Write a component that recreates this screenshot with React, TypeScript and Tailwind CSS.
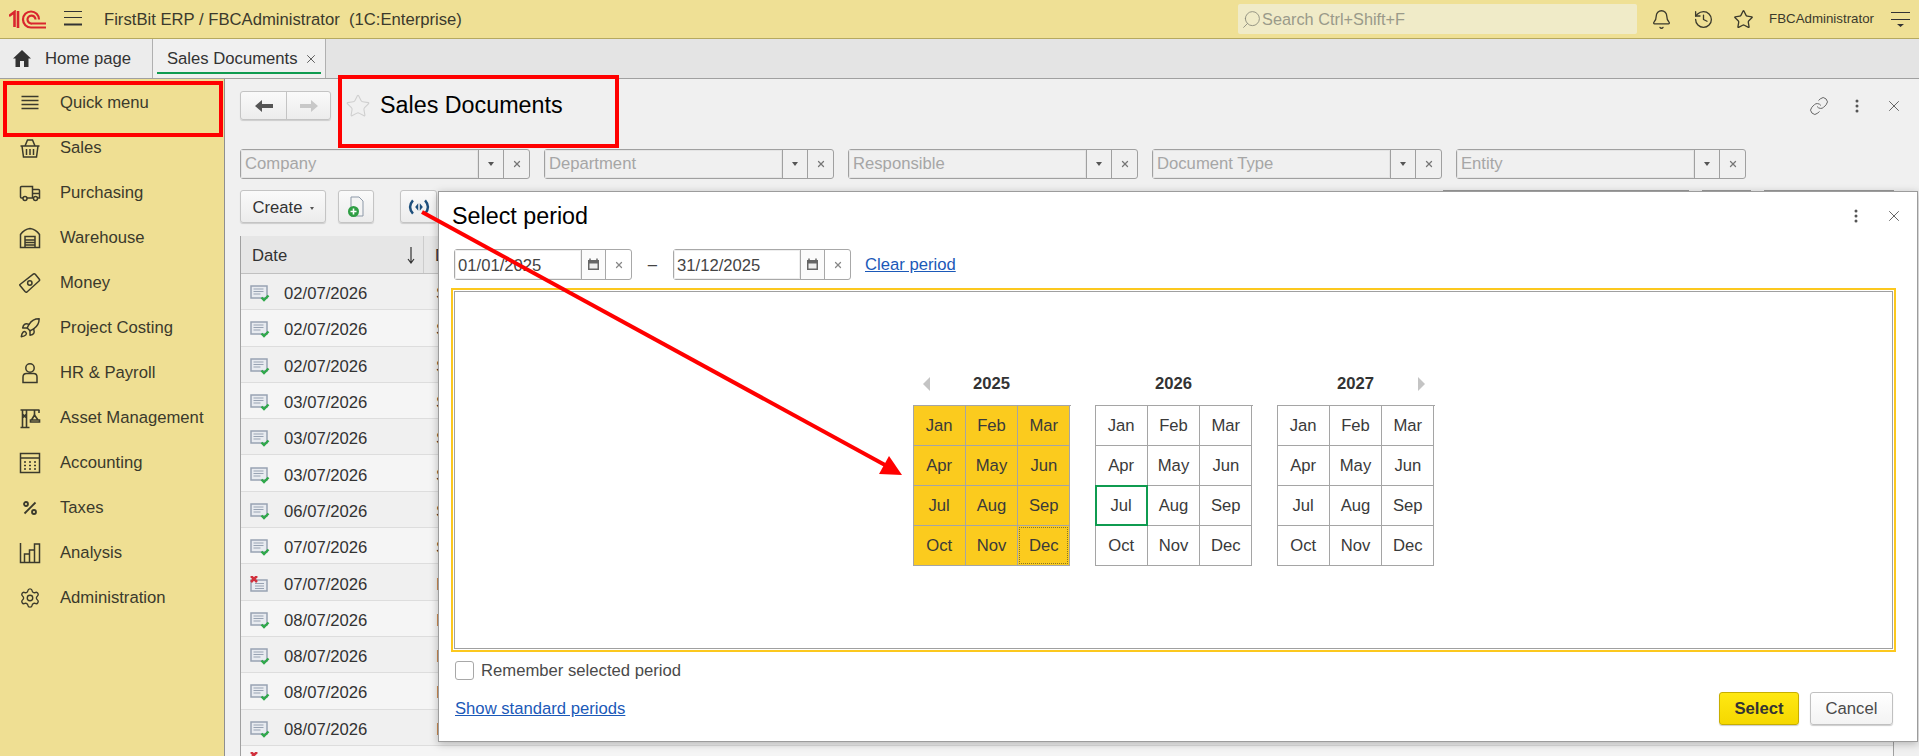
import { Bell, History, Link, Search, Star, Rocket, Settings, X } from "lucide-react";

const MENU = ["Quick menu", "Sales", "Purchasing", "Warehouse", "Money", "Project Costing", "HR & Payroll", "Asset Management", "Accounting", "Taxes", "Analysis", "Administration"];

const ROWS = [
  ["02/07/2026", "S", true], ["02/07/2026", "S", true], ["02/07/2026", "S", true], ["03/07/2026", "S", true],
  ["03/07/2026", "S", true], ["03/07/2026", "S", true], ["06/07/2026", "S", true], ["07/07/2026", "S", true],
  ["07/07/2026", "I", false], ["08/07/2026", "I", true], ["08/07/2026", "I", true], ["08/07/2026", "I", true],
  ["08/07/2026", "I", true],
] as const;

const MONTHS = ["Jan", "Feb", "Mar", "Apr", "May", "Jun", "Jul", "Aug", "Sep", "Oct", "Nov", "Dec"];
const FILTERS = ["Company", "Department", "Responsible", "Document Type", "Entity"];

function MenuIcon({ name }: { name: string }) {
  const c = "w-[22px] h-[22px] shrink-0 text-[#3b3a2c]";
  switch (name) {
    case "Quick menu":
      return <svg className={c} viewBox="0 0 22 22" stroke="currentColor" strokeWidth="1.3"><path d="M2.5 4.5h17M2.5 8.5h17M2.5 12.5h17M2.5 16.5h17" /></svg>;
    case "Sales":
      return (
        <svg className={c} viewBox="0 0 22 22" fill="none" stroke="currentColor" strokeWidth="1.5">
          <path d="M6 9 8.5 3h5L16 9M1.5 9h19M3 9l1.5 11h13L19 9M7.5 12v6M11 12v6M14.5 12v6" />
        </svg>
      );
    case "Purchasing":
      return (
        <svg className={c} viewBox="0 0 22 22" fill="none" stroke="currentColor" strokeWidth="1.5">
          <path d="M4 16H2.5a1 1 0 0 1-1-1V5.5a1 1 0 0 1 1-1h11V16H8M13.5 7.5h6a1 1 0 0 1 1 1V16h-1.5M14.5 16h-1M13.5 11.5h7" />
          <circle cx="6" cy="16.5" r="2" /><circle cx="16.5" cy="16.5" r="2" />
        </svg>
      );
    case "Warehouse":
      return (
        <svg className={c} viewBox="0 0 22 22" fill="none" stroke="currentColor" strokeWidth="1.5">
          <path d="M1.5 20.5V7.5C4 4 7 2 11 1.5c4 .5 7 2.5 9.5 6v13z" />
          <path d="M6 20.5V9.5h10v11" />
          <path d="M6 13h10M6 15.5h10M6 18h10" strokeWidth="1.7" />
        </svg>
      );
    case "Money":
      return (
        <svg className={c} viewBox="0 0 22 22" fill="none" stroke="currentColor" strokeWidth="1.5">
          <path d="M1 12.5 14.5 2q1-.5 2 .5l4 5q.5 1-.5 1.5L8 20q-1 .5-2-.5l-5-6q-.5-.5 0-1z" />
          <circle cx="10.8" cy="11" r="2.2" />
        </svg>
      );
    case "Project Costing":
      return <Rocket className={c} strokeWidth={1.6} />;
    case "HR & Payroll":
      return (
        <svg className={c} viewBox="0 0 22 22" fill="none" stroke="currentColor" strokeWidth="1.5">
          <circle cx="11" cy="6" r="4.2" />
          <path d="M4 20.5V15c0-2 1.5-3.5 3.5-3.5h7c2 0 3.5 1.5 3.5 3.5v5.5z" />
        </svg>
      );
    case "Asset Management":
      return (
        <svg className={c} viewBox="0 0 22 22" fill="none" stroke="currentColor" strokeWidth="1.6">
          <path d="M1.5 20.5h9M1.5 3h19M3.5 3v17M7.5 3v17M3.5 7l4 4M7.5 7l-4 4M15.5 3v5" />
          <path d="M12.5 13l3-5 3.5 5zM11.5 13h9v2h-9z" />
          <path d="M20 3v3" />
        </svg>
      );
    case "Accounting":
      return (
        <svg className={c} viewBox="0 0 22 22" fill="none" stroke="currentColor" strokeWidth="1.5">
          <rect x="1.5" y="1.5" width="19" height="19" /><path d="M1.5 6h19" />
          <path d="M5 10h2M10 10h2M15 10h2M5 13.5h2M10 13.5h2M15 13.5h2M5 17h2M10 17h2M15 17h2" />
        </svg>
      );
    case "Taxes":
      return (
        <svg className={c} viewBox="0 0 22 22" fill="none" stroke="currentColor" strokeWidth="1.8">
          <path d="M16.5 5.5l-11 11" /><circle cx="7" cy="7" r="2" /><circle cx="15" cy="15" r="2" />
        </svg>
      );
    case "Analysis":
      return (
        <svg className={c} viewBox="0 0 22 22" fill="none" stroke="currentColor" strokeWidth="1.5">
          <path d="M1.5 1v19.5h19V2h-5v18.5M15.5 8h-5v12.5M10.5 12h-5v8.5" />
        </svg>
      );
    default:
      return <Settings className={c} strokeWidth={1.5} />;
  }
}

function DocIcon({ ok }: { ok: boolean }) {
  return (
    <svg className="w-[20px] h-[18px] shrink-0 mt-[5px]" viewBox="0 0 20 18" fill="none">
      <rect x="1" y={ok ? 1 : 4} width="16" height={ok ? 12 : 11} fill="#e8ebf0" stroke="#98a3b3" strokeWidth="1.5" />
      <path d={ok ? "M3.5 4h10M3.5 6.5h10M3.5 9h7" : "M5 7.5h9M5 10h9M5 12.5h9"} stroke="#98a3b3" />
      {ok ? (
        <path d="m11.5 12.5 2.5 2.5 4.5-4.500" stroke="#2fa84a" strokeWidth="2.4" />
      ) : (
        <path d="m1 0 6 6M7 0 1 6" stroke="#d1303c" strokeWidth="2.6" />
      )}
    </svg>
  );
}

function Caret() {
  return <span className="w-0 h-0 border-x-[3px] border-t-[4px] border-x-transparent border-t-[#555]" />;
}

function Filter({ label }: { label: string }) {
  return (
    <div className="flex w-[290px] h-[30px] rounded-[3px] border border-[#a0a0a0] bg-[#f0f0f0]">
      <div className="flex-1 pl-[4px] text-[#a6a6a6] leading-[28px] border-r border-[#a0a0a0] shadow-[inset_0_0_0_1px_#e4e4e4]">{label}</div>
      <div className="w-[25px] flex items-center justify-center border-r border-[#a0a0a0]"><Caret /></div>
      <div className="w-[25px] flex items-center justify-center"><X className="w-[10px] h-[10px] text-[#777]" strokeWidth={3} /></div>
    </div>
  );
}

function DateField({ value }: { value: string }) {
  return (
    <div className="flex w-[178px] h-[31px] rounded-[3px] border border-[#a8a8a8] bg-white">
      <div className="flex-1 pl-[3px] pt-[1px] leading-[30px] text-[#444] shadow-[inset_0_0_0_1px_#eeeeee]">{value}</div>
      <div className="w-[25px] flex items-center justify-center border-x border-[#a8a8a8] bg-[#fbfbfb]">
        <svg className="w-[13px] h-[13px]" viewBox="0 0 13 13"><rect x="1" y="2" width="11" height="10" fill="#666" /><rect x="2.5" y="5.5" width="8" height="5" fill="#eee" /><path d="M3 .5v3M10 .5v3" stroke="#666" strokeWidth="1.5" /></svg>
      </div>
      <div className="w-[25px] flex items-center justify-center"><X className="w-[10px] h-[10px] text-[#888]" strokeWidth={3} /></div>
    </div>
  );
}

function YearGrid({ year, selected, left, right }: { year: number; selected?: boolean; left?: boolean; right?: boolean }) {
  return (
    <div className="w-[158px]">
      <div className="relative h-[28px] flex items-start justify-center font-bold text-[#333] leading-[13px]">
        <span>{year}</span>
        {left && <span className="absolute left-[10px] top-[0px] w-0 h-0 border-y-[7px] border-r-[7px] border-y-transparent border-r-[#c4c4c4]" />}
        {right && <span className="absolute right-[10px] top-[0px] w-0 h-0 border-y-[7px] border-l-[7px] border-y-transparent border-l-[#c4c4c4]" />}
      </div>
      <div className="grid grid-cols-3 border-l border-t border-[#a5a5a5]">
        {MONTHS.map((m) => (
          <div
            key={m}
            className={`relative h-[40px] flex items-center justify-center border-r border-b border-[#a5a5a5] text-[#3a3a3a] ${selected ? "bg-[#fbcb1e]" : "bg-white"}`}
          >
            {m}
            {!selected && year === 2026 && m === "Jul" && <span className="absolute -inset-px border-2 border-[#0f9b50]" />}
            {selected && m === "Dec" && <span className="absolute inset-[1px] border border-dotted border-[#8a7420]" />}
          </div>
        ))}
      </div>
    </div>
  );
}

function Dots() {
  return <svg className="w-[4px] h-[14px]" viewBox="0 0 4 14" fill="#555"><circle cx="2" cy="2" r="1.5" /><circle cx="2" cy="7" r="1.5" /><circle cx="2" cy="12" r="1.5" /></svg>;
}

function SelectPeriod() {
  return (
    <div className="absolute left-[438px] top-[191px] w-[1480px] h-[551px] flex flex-col bg-white border border-[#9c9c9c] shadow-[0_2px_8px_rgba(0,0,0,0.25)] pl-[12px] pr-[21px]">
      <div className="flex items-center h-[48px] shrink-0">
        <div className="text-[23.3px] text-black pl-[1px]">Select period</div>
        <div className="ml-auto flex items-center gap-[27px] -mr-[7px]">
          <Dots />
          <X className="w-[18px] h-[18px] text-[#555]" strokeWidth={1.2} />
        </div>
      </div>
      <div className="flex items-center h-[31px] pl-[3px] mt-[9px] shrink-0">
        <DateField value="01/01/2025" />
        <span className="w-[41px] text-center text-[#444]">–</span>
        <DateField value="31/12/2025" />
        <a className="ml-[14px] text-[#1b59b8] underline">Clear period</a>
      </div>
      <div className="mt-[8px] h-[364px] shrink-0 border-2 border-[#fcc81e] p-[1px]">
        <div className="h-full border border-[#a0a0a0] flex items-center justify-center gap-[24px] pt-[3px]">
          <YearGrid year={2025} selected left />
          <YearGrid year={2026} />
          <YearGrid year={2027} right />
        </div>
      </div>
      <label className="flex items-center gap-[7px] pl-[4px] mt-[9px] h-[19px] shrink-0 text-[#4a4a4a]">
        <span className="w-[19px] h-[19px] rounded-[3px] border border-[#a8a8a8] bg-white" />
        Remember selected period
      </label>
      <div className="flex items-center mt-[12px] pl-[4px] shrink-0">
        <a className="text-[#1b59b8] underline">Show standard periods</a>
        <div className="ml-auto flex gap-[11px] pr-[3px]">
          <button className="w-[80px] h-[33px] rounded-[3px] border border-[#c7ae00] bg-linear-to-b from-[#ffe812] to-[#f5d800] font-bold text-[#333] shadow-[0_1px_1px_rgba(0,0,0,0.2)]">Select</button>
          <button className="w-[83px] h-[33px] rounded-[3px] border border-[#c0c0c0] bg-linear-to-b from-white to-[#f3f3f3] text-[#4a4a4a] shadow-[0_1px_1px_rgba(0,0,0,0.2)]">Cancel</button>
        </div>
      </div>
    </div>
  );
}

export default function App() {
  return (
    <div className="relative w-[1919px] h-[756px] overflow-hidden flex flex-col bg-[#f0f0f0] font-['Liberation_Sans',Arial,sans-serif] text-[16.67px]">
      {/* Top bar */}
      <header className="h-[39px] shrink-0 flex items-center bg-[#efe095] border-b border-[#b5a960] text-[#3b3a2c]">
        <svg className="ml-[9px] w-[37px] h-[19px]" viewBox="0 0 37 19" fill="none" stroke="#d9262e" strokeWidth="2.2">
          <path d="M0 6 5.500 2v15M9 1v17" strokeWidth="2.6" />
          <path d="M37 17.5H22A8 8 0 1 1 30 9.5" />
          <path d="M37 13.5H23A4 4 0 1 1 26.5 9.5" />
        </svg>
        <svg className="ml-[18px] w-[18px] h-[16px]" viewBox="0 0 18 16" stroke="#333"><path d="M0 .5h18M0 6.5h18" strokeWidth="1.2" /><path d="M0 13.5h18" strokeWidth="2" /></svg>
        <span className="ml-[22px] whitespace-pre">FirstBit ERP / FBCAdministrator  (1C:Enterprise)</span>
        <div className="ml-auto mr-[14px] w-[399px] h-[30px] rounded-[2px] bg-[#f0ebc8] flex items-center pl-[3px] text-[#9a9a8a]">
          <Search className="w-[21px] h-[21px] text-[#8a8a7c] -scale-x-100" strokeWidth={1} />
          <span className="text-[16.3px]">Search Ctrl+Shift+F</span>
        </div>
        <Bell className="w-[21px] h-[21px] mr-[21px]" strokeWidth={1.5} />
        <History className="w-[21px] h-[21px] mr-[19px]" strokeWidth={1.5} />
        <Star className="w-[21px] h-[21px] mr-[15px]" strokeWidth={1.5} />
        <span className="text-[13.3px] mr-[17px]">FBCAdministrator</span>
        <svg className="w-[19px] h-[16px] mr-[9px]" viewBox="0 0 19 16" fill="#333"><path d="M0 1h19v1H0zM0 8h19v1H0zM6 13h7l-3.5 3z" /></svg>
      </header>

      {/* Tabs */}
      <nav className="h-[40px] shrink-0 flex bg-[#e4e4e4] border-b border-[#a0a0a0] text-[#333]">
        <div className="w-[153px] flex items-center bg-[#ececec] border-r border-[#b0b0b0]">
          <svg className="ml-[13px] w-[18px] h-[17px] shrink-0" viewBox="0 0 18 17" fill="#333"><path d="M9 0 18 8.5h-2.500V17H11v-6H7v6H2.500V8.500H0z" /></svg>
          <span className="ml-[14px]">Home page</span>
        </div>
        <div className="relative w-[173px] flex items-center bg-[#f0f0f0] border-r border-[#b0b0b0] pl-[14px]">
          <span className="whitespace-nowrap">Sales Documents</span>
          <X className="ml-[6px] w-[14px] h-[14px] shrink-0 text-[#555]" strokeWidth={1.6} />
          <span className="absolute left-[4px] right-[4px] bottom-[4px] h-[2px] bg-[#0f9b50]" />
        </div>
      </nav>

      <div className="flex-1 flex min-h-0">
        {/* Sidebar */}
        <aside className="w-[225px] shrink-0 bg-[#efdf93] border-r border-[#8f8f8f] text-[#3b3a2c] pt-[1px]">
          {MENU.map((m) => (
            <div key={m} className="h-[45px] flex items-center pl-[19px] gap-[19px]">
              <MenuIcon name={m} />
              <span>{m}</span>
            </div>
          ))}
        </aside>

        {/* Main */}
        <main className="flex-1 min-w-0 pl-[15px] pr-[25px] flex flex-col text-[#333]">
          <div className="flex items-center h-[29px] mt-[12px] shrink-0">
            <div className="flex w-[91px] h-[29px] rounded-[3px] border border-[#c4c4c4] bg-linear-to-b from-[#fafafa] to-[#ececec] shadow-[0_1px_1px_rgba(0,0,0,0.15)]">
              <div className="w-[46px] flex items-center justify-center border-r border-[#c4c4c4]">
                <svg className="w-[18px] h-[14px]" viewBox="0 0 18 14" fill="#555"><path d="M0 7 7 1v4h11v4H7v4z" /></svg>
              </div>
              <div className="flex-1 flex items-center justify-center">
                <svg className="w-[18px] h-[14px]" viewBox="0 0 18 14" fill="#c8c8c8"><path d="M18 7l-7-6v4H0v4h11v4z" /></svg>
              </div>
            </div>
            <Star className="ml-[14px] w-[26px] h-[26px] text-[#cfcfcf]" strokeWidth={1} />
            <span className="ml-[9px] text-[23.3px] text-black">Sales Documents</span>
            <div className="ml-auto flex items-center gap-[26px] -mr-[9px]">
              <Link className="w-[20px] h-[20px] text-[#666]" strokeWidth={1.2} />
              <Dots />
              <X className="w-[18px] h-[18px] text-[#555]" strokeWidth={1.2} />
            </div>
          </div>

          <div className="flex gap-[14px] mt-[29px] shrink-0">
            {FILTERS.map((f) => <Filter key={f} label={f} />)}
          </div>

          <div className="flex items-start h-[33px] mt-[11px] shrink-0">
            <button className="w-[86px] h-[33px] pt-[1px] rounded-[3px] border border-[#c4c4c4] bg-linear-to-b from-[#fafafa] to-[#ececec] flex items-center justify-center gap-[7px] shadow-[0_1px_1px_rgba(0,0,0,0.15)]">
              Create <span className="w-0 h-0 border-x-[2.5px] border-t-[3px] border-x-transparent border-t-[#555] mt-[3px]" />
            </button>
            <button className="ml-[12px] w-[36px] h-[33px] rounded-[3px] border border-[#c4c4c4] bg-linear-to-b from-[#fafafa] to-[#ececec] flex items-center justify-center shadow-[0_1px_1px_rgba(0,0,0,0.15)]">
              <svg className="w-[18px] h-[22px]" viewBox="0 0 18 22" fill="none">
                <path d="M4 1h8l4 4v15H4z" fill="#f4f4f4" stroke="#8d99a8" />
                <circle cx="6.5" cy="15.5" r="5.5" fill="#2f9e44" />
                <path d="M6.5 12.5v6M3.5 15.5h6" stroke="#fff" strokeWidth="1.6" />
              </svg>
            </button>
            <button className="ml-[26px] w-[37px] h-[33px] rounded-[3px] border border-[#c4c4c4] bg-linear-to-b from-[#fafafa] to-[#ececec] flex items-center justify-center shadow-[0_1px_1px_rgba(0,0,0,0.15)]">
              <svg className="w-[22px] h-[16px]" viewBox="0 0 20 14" fill="none">
                <path d="M4.5 1C1 5 1 9 4.500 13M15.500 1c3.500 4 3.500 8 0 12" stroke="#1d4f7c" strokeWidth="2.2" />
                <path d="M9.300 3.500 6.500 7l2.800 3.500zM10.700 3.500 13.500 7l-2.800 3.500z" fill="#1d4f7c" />
              </svg>
            </button>
            <div className="ml-auto flex gap-[13px]">
              <div className="w-[246px] h-[33px] border-t border-[#999]" />
              <div className="w-[49px] h-[33px] border-t border-[#999]" />
              <div className="w-[130px] h-[33px] border-t border-[#999]" />
            </div>
          </div>

          {/* Table */}
          <div className="mt-[13px] flex-1 min-h-0 border-l border-r border-[#a0a0a0]">
            <div className="flex h-[38px] bg-[#e6e6e6] border-b border-[#c0c0c0]">
              <div className="w-[183px] flex items-center justify-between pl-[11px] pr-[8px] pt-[2px] border-r border-[#cccccc]">
                Date
                <svg className="w-[8px] h-[17px]" viewBox="0 0 8 17" fill="none" stroke="#333" strokeWidth="1.2"><path d="M4 0v16M1 12l3 4 3-4" /></svg>
              </div>
              <div className="pl-[11px] pt-[2px] flex items-center">D</div>
            </div>
            {ROWS.map(([date, type, ok], i) => (
              <div key={i} className={`flex items-center h-[36.3px] border-b border-[#dddddd] ${i % 2 === 0 ? "bg-[#f0f0f0]" : "bg-[#f5f5f5]"}`}>
                <div className="w-[195px] flex items-center pl-[9px]">
                  <DocIcon ok={ok} />
                  <span className="ml-[14px] pt-[4px]">{date}</span>
                </div>
                <span className="pt-[4px]">{type}</span>
              </div>
            ))}
            {/* next row is cut by the window, only its status mark shows */}
            <div className="pl-[9px] pt-[6px] bg-[#f5f5f5]">
              <svg className="w-[8px] h-[6px] block" viewBox="0 0 8 6" fill="none"><path d="m1 0 6 6M7 0 1 6" stroke="#d1303c" strokeWidth="2.6" /></svg>
            </div>
          </div>
        </main>
      </div>

      <SelectPeriod />

      {/* Annotations from the person who took the screenshot */}
      <div className="absolute left-[3px] top-[81px] w-[220px] h-[56px] border-[4px] border-[#ff0000]" />
      <div className="absolute left-[338px] top-[75px] w-[281px] h-[73px] border-[4px] border-[#ff0000]" />
      <svg className="absolute left-0 top-0 w-[1919px] h-[756px] pointer-events-none" viewBox="0 0 1919 756" fill="none">
        <path d="M422 212 885 465" stroke="#ff0000" strokeWidth="4" />
        <path d="M902 475 879 474 889 456z" fill="#ff0000" />
      </svg>
    </div>
  );
}
